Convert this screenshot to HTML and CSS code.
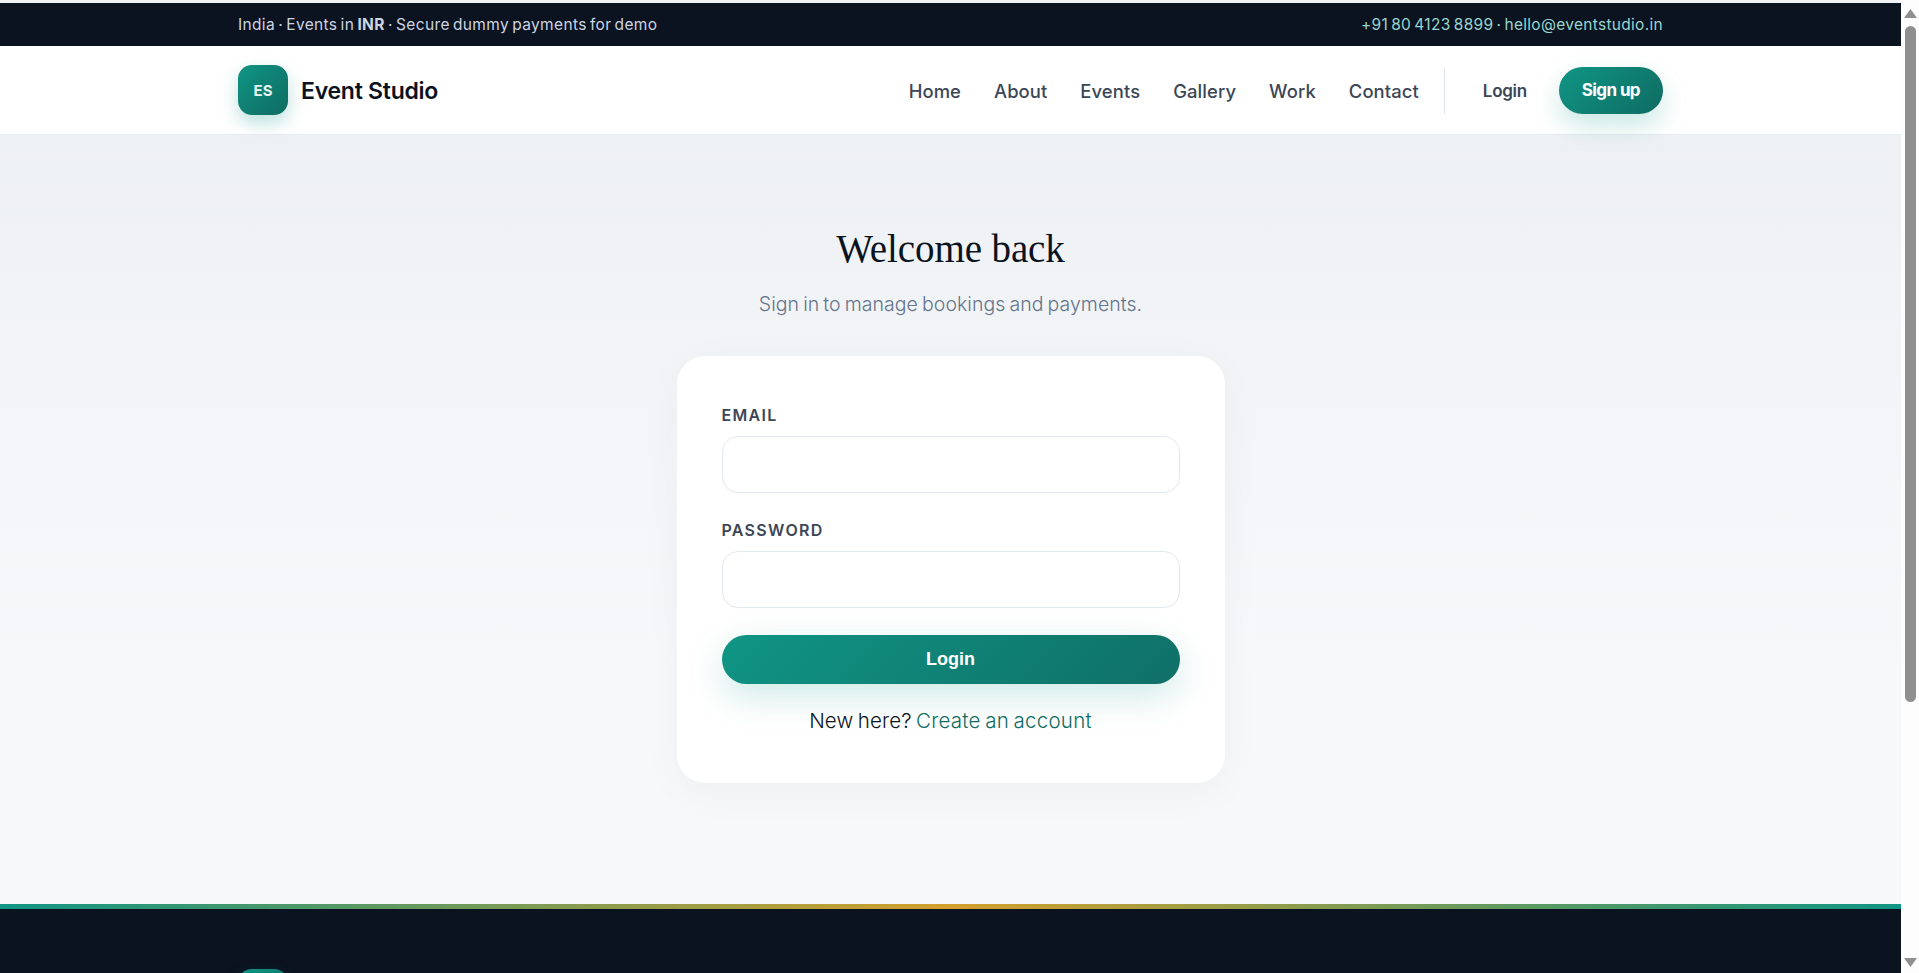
FILE: index.html
```html
<!DOCTYPE html>
<html lang="en">
<head>
    <meta charset="UTF-8">
    <meta name="viewport" content="width=device-width, initial-scale=1.0">
    <title>Login - Event Studio</title>
    <link rel="stylesheet" href="styles.css">
</head>
<body>
    <!-- Top info bar -->
    <div class="topbar">
        <div class="wrap topbar-row">
            <span>India · Events in <strong>INR</strong> · Secure dummy payments for demo</span>
            <span class="topbar-contact">+91 80 4123 8899 · hello@eventstudio.in</span>
        </div>
    </div>

    <!-- Header -->
    <header class="site-header">
        <div class="wrap header-row">
            <a class="brand" href="#">
                <span class="brand-mark">ES</span>
                <span class="brand-name">Event Studio</span>
            </a>
            <nav class="main-nav">
                <a href="#">Home</a>
                <a href="#">About</a>
                <a href="#">Events</a>
                <a href="#">Gallery</a>
                <a href="#">Work</a>
                <a href="#">Contact</a>
            </nav>
            <div class="header-actions">
                <a class="login-link" href="#">Login</a>
                <a class="signup-btn" href="#">Sign up</a>
            </div>
        </div>
    </header>

    <!-- Login form -->
    <main class="auth-page">
        <h1>Welcome back</h1>
        <p class="auth-sub">Sign in to manage bookings and payments.</p>
        <form class="auth-card">
            <label for="email">Email</label>
            <input type="email" id="email">
            <label for="password">Password</label>
            <input type="password" id="password">
            <button type="button">Login</button>
            <p class="auth-alt">New here? <a href="#">Create an account</a></p>
        </form>
    </main>

    <!-- Footer -->
    <div class="footer-stripe"></div>
    <footer class="site-footer">
        <div class="wrap">
            <a class="brand" href="#" aria-label="Event Studio">
                <span class="brand-mark"></span>
            </a>
        </div>
    </footer>

    <!-- Window scrollbar -->
    <div class="scrollbar">
        <svg class="scroll-arrow" viewBox="0 0 13 9"><polygon points="6.5,0 13,9 0,9"/></svg>
        <div class="scroll-thumb"></div>
        <svg class="scroll-arrow scroll-arrow-down" viewBox="0 0 13 9"><polygon points="0,0 13,0 6.5,9"/></svg>
    </div>
</body>
</html>
```

FILE: styles.css
```css
/* Base */
body {
    margin: 0;
    padding: 3px 18px 0 0;
    background-color: #f0f2f4;
    color: #0b1220;
    font-family: 'Inter', 'Noto Sans', sans-serif;
}

a {
    color: inherit;
    text-decoration: none;
}

.wrap {
    width: 1425px;
    margin: 0 auto;
}

/* Top bar */
.topbar {
    background-color: #0b1220;
    color: #cbd5e1;
    font-size: 15.5px;
    letter-spacing: 0.35px;
    word-spacing: -1.5px;
}

.topbar-row {
    display: flex;
    justify-content: space-between;
    align-items: center;
    height: 43px;
}

.topbar-contact {
    color: #99d5cc;
    letter-spacing: 0.3px;
}

/* Header */
.site-header {
    background-color: #fff;
    border-bottom: 1px solid #e8ebef;
}

.header-row {
    display: flex;
    align-items: center;
    height: 88px;
}

.brand {
    display: flex;
    align-items: center;
    gap: 13px;
}

.brand-mark {
    display: flex;
    align-items: center;
    justify-content: center;
    width: 50px;
    height: 50px;
    border-radius: 14px;
    background: linear-gradient(135deg, #0f9584, #0f6b62);
    box-shadow: 0 8px 18px rgba(15, 149, 132, 0.28);
    color: #e9f7f5;
    font-size: 15px;
    font-weight: 700;
}

.brand-name {
    padding-top: 2px;
    font-size: 23px;
    font-weight: 600;
    letter-spacing: -0.25px;
}

.main-nav {
    display: flex;
    gap: 33px;
    margin-left: auto;
    padding-top: 2px;
    color: #3b4656;
    font-size: 18.4px;
    font-weight: 500;
    letter-spacing: 0.1px;
}

.header-actions {
    display: flex;
    align-items: center;
    gap: 32px;
    height: 47px;
    margin-left: 25px;
    padding-left: 38px;
    border-left: 1px solid #e2e8f0;
}

.login-link {
    padding-top: 2px;
    color: #3b4656;
    font-size: 17px;
    font-weight: 600;
    letter-spacing: -0.3px;
}

.signup-btn {
    display: flex;
    align-items: center;
    height: 47px;
    padding: 0 23px;
    border-radius: 24px;
    background: linear-gradient(135deg, #0f9584, #0f6b62);
    box-shadow: 0 12px 26px rgba(15, 149, 132, 0.22);
    color: #fff;
    font-size: 17px;
    font-weight: 700;
    letter-spacing: -0.6px;
}

/* Login form */
.auth-page {
    display: flex;
    flex-direction: column;
    align-items: center;
    height: 769px;
    background: linear-gradient(180deg, #eef1f4, #f7f8fa 70%);
}

h1 {
    margin: 90px 0 0;
    font-family: 'Liberation Serif', serif;
    font-size: 39px;
    font-weight: 400;
    line-height: 48px;
    letter-spacing: -0.1px;
}

.auth-sub {
    margin: 19px 0 0;
    color: #64748b;
    font-size: 19.5px;
    font-weight: 300;
    letter-spacing: 0.05px;
    word-spacing: -1.5px;
}

.auth-card {
    box-sizing: border-box;
    display: flex;
    flex-direction: column;
    width: 548px;
    height: 427px;
    margin-top: 40px;
    padding: 49px 45px 0;
    border-radius: 28px;
    background-color: #fff;
    box-shadow: 0 10px 40px rgba(11, 18, 32, 0.04);
}

label {
    margin-bottom: 11px;
    color: #3b4656;
    font-size: 16px;
    font-weight: 600;
    letter-spacing: 1.3px;
    text-transform: uppercase;
}

input {
    box-sizing: border-box;
    height: 57px;
    margin-bottom: 27px;
    border: 1px solid #e2e8f0;
    border-radius: 16px;
    background-color: #fff;
}

button {
    flex: none;
    height: 49px;
    border: none;
    border-radius: 25px;
    background: linear-gradient(135deg, #0f9584, #0f6f66);
    box-shadow: 0 12px 36px rgba(15, 149, 132, 0.2);
    color: #fff;
    font-family: 'Liberation Sans', sans-serif;
    font-size: 18px;
    font-weight: 700;
}

.auth-alt {
    margin: 24px 0 0;
    font-size: 20.5px;
    font-weight: 300;
    letter-spacing: 0.15px;
    word-spacing: -1.5px;
    text-align: center;
}

.auth-alt a {
    color: #0f6b62;
    letter-spacing: 0.25px;
}

/* Footer */
.footer-stripe {
    height: 5px;
    background: linear-gradient(90deg, #0f9584, #d4a02c 50%, #0f9584);
}

.site-footer {
    height: 438px;
    padding-top: 60px;
    box-sizing: border-box;
    background-color: #0b1220;
    color: #fff;
}

/* Window scrollbar, drawn over the right edge */
.scrollbar {
    position: fixed;
    top: 0;
    right: 0;
    bottom: 0;
    box-sizing: border-box;
    display: flex;
    flex-direction: column;
    align-items: center;
    width: 18px;
    padding: 9px 0 6px;
    background-color: #fdfdfd;
}

.scroll-arrow {
    width: 13px;
    height: 9px;
    fill: #8f8f8f;
}

.scroll-arrow-down {
    margin-top: auto;
}

.scroll-thumb {
    width: 11px;
    height: 676px;
    margin-top: 8px;
    border-radius: 6px;
    background-color: #8f8f8f;
}
```
